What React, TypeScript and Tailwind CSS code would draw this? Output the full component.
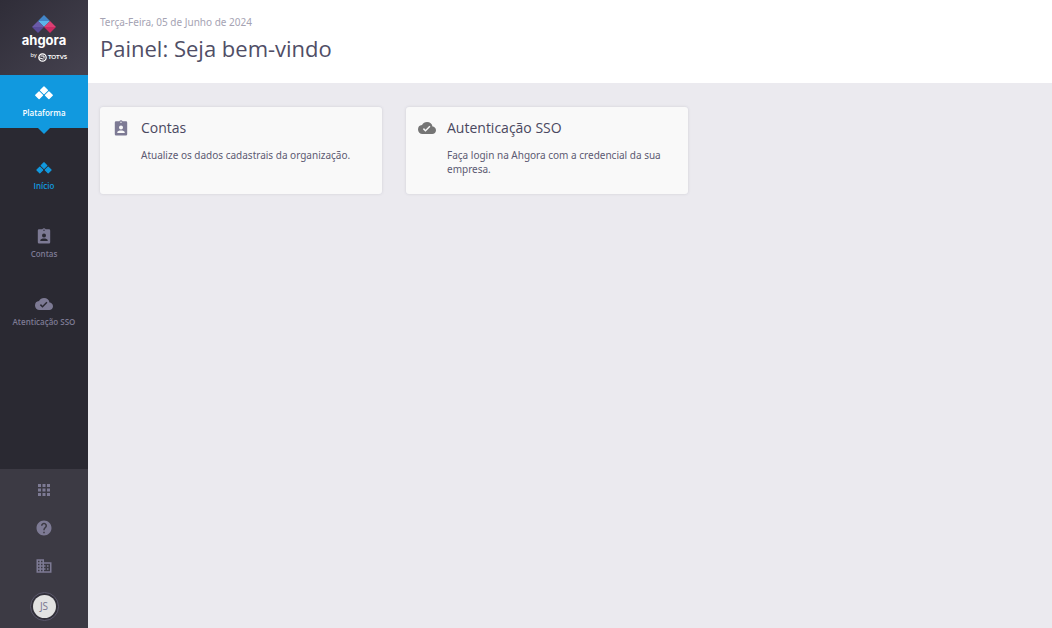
import type { ReactNode } from 'react';
import { MdApps, MdCloudDone, MdDomain, MdHelp } from 'react-icons/md';

function BadgeIcon({ className }: { className: string }) {
  return (
    <svg viewBox="0 0 14 16" fill="currentColor" className={className} aria-hidden="true">
      <path
        fillRule="evenodd"
        d="M2 1.3h3.400a1.700 1.700 0 0 1 3.200 0H12a1.200 1.200 0 0 1 1.200 1.200v11.800a1.200 1.200 0 0 1-1.200 1.200H2a1.200 1.200 0 0 1-1.200-1.200V2.500A1.200 1.200 0 0 1 2 1.300ZM7 1.500a.7.7 0 1 0 0 1.400.7.7 0 0 0 0-1.400ZM7 5.500a2 2 0 1 0 0 4A2 2 0 0 0 7 5.500ZM3.300 13h7.400v-.8c0-1.200-2-1.800-3.700-1.800s-3.700.6-3.700 1.800Z"
      />
    </svg>
  );
}

function DiamondsIcon({ className }: { className: string }) {
  return (
    <svg viewBox="0 0 18 14" fill="currentColor" className={className} aria-hidden="true">
      <g stroke="currentColor" strokeWidth="1.400" strokeLinejoin="round">
        <path d="M9 .9l3.300 3.300L9 7.500 5.700 4.200ZM4.100 6l3.300 3.300-3.300 3.300L.8 9.300ZM13.900 6l3.300 3.300-3.300 3.300-3.300-3.300Z" />
      </g>
    </svg>
  );
}

function Logo() {
  return (
    <a href="#inicio" aria-label="ahgora by TOTVS" className="flex h-[75px] flex-col items-center bg-linear-to-br from-[#2f2d38] to-[#45424f] pt-[15px] text-white">
      <svg viewBox="0 0 24 18" className="h-[18px] w-6" aria-hidden="true">
        <path d="M12 0l6 6H6Z" fill="#4285c8" />
        <path d="M6 6h12l-6 6Z" fill="#5cb5ea" />
        <path d="M6 6l6 6H0Z" fill="#6a5aa8" />
        <path d="M0 12h12l-6 6Z" fill="#5a4b98" />
        <path d="M18 6l6 6H12Z" fill="#dc3f73" />
        <path d="M12 12h12l-6 6Z" fill="#cb2b63" />
      </svg>
      <span className="font-['Inter',sans-serif] text-[13px] leading-[14px] font-bold">ahgora</span>
      <span className="flex items-center gap-px self-end pr-[21px] font-['Lato',sans-serif] text-[6px] leading-[16px] font-bold">
        <span className="pb-1 text-[6px] font-normal">by</span>
        <svg viewBox="0 0 9 9" className="size-[9px]" fill="none" stroke="currentColor" aria-hidden="true">
          <circle cx="4.500" cy="4.500" r="3.700" strokeWidth="1.200" />
          <path d="M2.500 3h3.500v2.500M1 4.800l4.500 1.400" strokeWidth="1" />
        </svg>
        TOTVS
      </span>
    </a>
  );
}

function NavItem({ href, label, active, children }: { href: string; label: string; active?: boolean; children: ReactNode }) {
  return (
    <a href={href} className={`flex flex-col items-center gap-1 text-[8px] leading-3 font-semibold ${active ? 'text-[#1199df]' : 'text-[#7d7a94]'}`}>
      <span className="flex h-4 items-center">{children}</span>
      {label}
    </a>
  );
}

function Sidebar() {
  return (
    <aside className="flex w-[88px] shrink-0 flex-col bg-[#2a2932]">
      <Logo />
      <a href="#plataforma" className="relative flex h-[53px] flex-col items-center gap-[7px] bg-[#1199df] pt-[11px] text-[8px] leading-3 font-semibold text-white">
        <DiamondsIcon className="h-[14px] w-[18px]" />
        Plataforma
        <svg viewBox="0 0 12 6" className="absolute top-full h-[6px] w-3" fill="#1199df" aria-hidden="true">
          <path d="M0 0h12L6 6Z" />
        </svg>
      </a>
      <nav aria-label="Principal" className="flex flex-1 flex-col gap-9 pt-8">
        <NavItem href="#inicio" label="Início" active>
          <DiamondsIcon className="h-3 w-4" />
        </NavItem>
        <NavItem href="#contas" label="Contas">
          <BadgeIcon className="h-4 w-[14px]" />
        </NavItem>
        <NavItem href="#sso" label="Atenticação SSO">
          <MdCloudDone className="size-[18px]" />
        </NavItem>
      </nav>
      <div className="flex flex-col items-center gap-5 bg-[#3c3a44] pt-3 pb-[7px] text-[#7d7a94]">
        <button type="button" aria-label="Aplicativos">
          <MdApps className="size-[18px]" />
        </button>
        <button type="button" aria-label="Ajuda">
          <MdHelp className="size-[18px]" />
        </button>
        <button type="button" aria-label="Empresa">
          <MdDomain className="size-[18px]" />
        </button>
        <button
          type="button"
          aria-label="Perfil JS"
          className="-mt-[3px] flex size-[29px] items-center justify-center rounded-full border border-[#5b586c] bg-[#32303a]"
        >
          <span className="flex size-[23px] items-center justify-center rounded-full bg-[#e2e2e2] text-[10px] font-medium text-[#77748c]">JS</span>
        </button>
      </div>
    </aside>
  );
}

function Card({ href, icon, title, text }: { href: string; icon: ReactNode; title: string; text: string }) {
  return (
    <a href={href} className="flex min-h-[87px] w-[282px] rounded-[3px] bg-[#f9f9f9] pt-3 pr-4 shadow-[0_0_3px_rgba(60,55,90,0.16)]">
      <span className="flex h-[18px] w-[41px] shrink-0 items-center justify-center">{icon}</span>
      <span className="block text-[#4a4860]">
        <span className="block text-sm leading-[18px]">{title}</span>
        <span className="mt-[11px] block font-['Noto_Sans',sans-serif] text-[10px] leading-[14px] text-[#5c5a72]">{text}</span>
      </span>
    </a>
  );
}

export default function App() {
  return (
    <div className="flex min-h-screen bg-[#ebeaef] font-['Open_Sans',sans-serif]">
      <Sidebar />
      <div className="min-w-0 flex-1">
        <header className="h-[83px] bg-white px-3 pt-[15px]">
          <p className="font-['Noto_Sans',sans-serif] text-[10px] leading-[14px] text-[#a5a3b3]">Terça-Feira, 05 de Junho de 2024</p>
          <h1 className="mt-1 text-[22px] leading-[30px] text-[#504e66]">Painel: Seja bem-vindo</h1>
        </header>
        <main className="flex flex-wrap gap-6 px-3 pt-6">
          <Card
            href="#contas"
            icon={<BadgeIcon className="h-4 w-[14px] text-[#7d7a94]" />}
            title="Contas"
            text="Atualize os dados cadastrais da organização."
          />
          <Card
            href="#sso"
            icon={<MdCloudDone className="size-[18px] text-[#757575]" />}
            title="Autenticação SSO"
            text="Faça login na Ahgora com a credencial da sua empresa."
          />
        </main>
      </div>
    </div>
  );
}
